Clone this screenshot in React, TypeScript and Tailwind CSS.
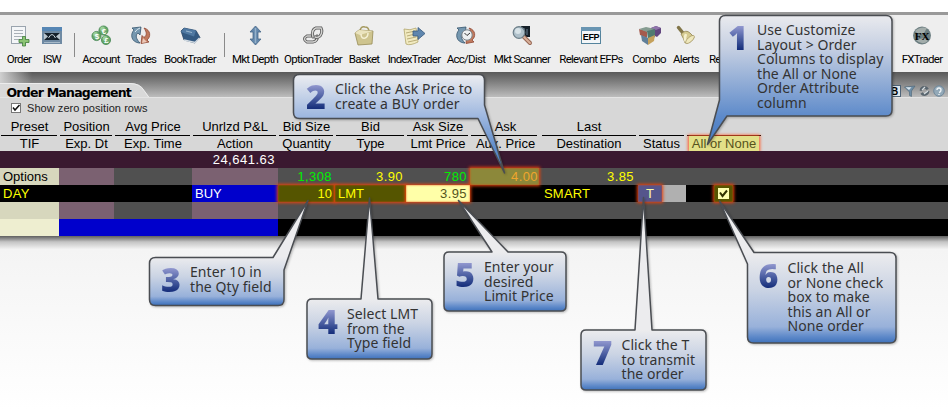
import React from "react";

type Kids = { children?: React.ReactNode };

function Icon({ children }: Kids) {
  return (
    <svg width="20" height="20" viewBox="0 0 20 20" className="shrink-0 overflow-visible">
      {children}
    </svg>
  );
}

function Tool({ w, label, left, children }: Kids & { w: string; label: string; left?: boolean }) {
  return (
    <div className={`flex shrink-0 flex-col pt-[11px] ${left ? "items-start" : "items-center"} ${w}`}>
      <div className="h-5">{children}</div>
      <span className="mt-[5px] text-[11.5px] leading-4 whitespace-nowrap text-black">{label}</span>
    </div>
  );
}

function Separator({ w }: { w: string }) {
  return (
    <div className={`flex shrink-0 justify-center pt-[18px] ${w}`}>
      <div className="h-6 w-px bg-[#8a8a8a]" />
    </div>
  );
}

const OrderIcon = () => (
  <Icon>
    <rect x="2.5" y="0.5" width="14" height="17" fill="#f4f6f8" stroke="#9aa4ae" />
    <path d="M5 4.500h9M5 7.500h9M5 10.500h9M5 13.500h6" stroke="#a9b0b8" />
    <path d="M13.500 10.500h3v3h3.500v3h-3.500v3.500h-3v-3.500H10v-3h3.500z" fill="#8cc474" stroke="#3f7d3a" strokeWidth=".8" />
  </Icon>
);
const IswIcon = () => (
  <Icon>
    <rect x="0" y="1" width="20" height="17" fill="#6f8aa3" />
    <rect x="0" y="1" width="20" height="4" fill="#5686b4" />
    <rect x="2" y="7" width="16" height="7" fill="#15202b" />
    <path d="M2 7l4 3.500L2 14zM18 7l-4 3.500 4 3.500z" fill="#b8c4cd" />
    <path d="M6.500 12q3.500-7 7 0" fill="none" stroke="#cbd5dc" />
    <path d="M2 16.500h16" stroke="#a8bac9" />
  </Icon>
);
const AccountIcon = () => (
  <Icon>
    {[
      [5.5, 10, "$"],
      [12.5, 4.5, "€"],
      [15, 14, "£"],
    ].map(([x, y, s]) => (
      <g key={s}>
        <circle cx={x} cy={y} r="4.600" fill="#65a768" stroke="#3c7f4c" strokeWidth=".7" />
        <circle cx={Number(x) - 1} cy={Number(y) - 1.5} r="2.400" fill="#9bcf98" />
        <text x={x} y={Number(y) + 3} textAnchor="middle" className="fill-white font-['Liberation_Sans',sans-serif] text-[8px] font-bold">{s}</text>
      </g>
    ))}
  </Icon>
);
const CycleShapes = () => (
  <>
    <path d="M8 17C0 16-1 8 3 4L1 2l9-1-1 8-2-2c-3 2-2 6 2 10z" fill="#7698b0" stroke="#36566e" strokeWidth=".8" />
    <path d="M13 2c7 2 7 9 3 12l2 2-8 1.500 1-8 2 2c3-2 3-5 0-9.500z" fill="#c07a5e" stroke="#8f4735" strokeWidth=".8" />
  </>
);
const TradesIcon = () => (
  <Icon>
    <CycleShapes />
    <path d="M4 6q2-3 5-4" stroke="#dbe8ef" fill="none" />
    <path d="M12 12l-1 5 5-1z" fill="#ecc8b8" />
  </Icon>
);
const BookIcon = () => (
  <Icon>
    <path d="M4 2l12 2.500 4 7-5 5.500-11-3L1 5z" fill="#345a82" stroke="#203f60" strokeWidth=".7" />
    <path d="M4 2l12 2.500-2 6L1 6z" fill="#5079a2" />
    <path d="M4 14l11 2.500 4.500-4.500" stroke="#d4dce3" strokeWidth="1.500" fill="none" />
    <path d="M6 5l6 1.500" stroke="#9ab7cf" />
  </Icon>
);
const DepthIcon = () => (
  <Icon>
    <path d="M10.500 0l5.500 6H13v7h3L10.500 19l-5.500-6h3V6H5z" fill="#6387ab" stroke="#466789" strokeWidth=".8" />
    <path d="M10.500 2v15" stroke="#96b2ca" strokeWidth="1.500" />
  </Icon>
);
const ChainIcon = () => (
  <Icon>
    <g fill="none" strokeLinecap="round">
      <path d="M8 10H4q-5 3 0 6h6q5-1 4-6" stroke="#575757" strokeWidth="3" />
      <path d="M8 10H4q-5 3 0 6h6q5-1 4-6" stroke="#d4d4d2" strokeWidth="1.400" />
      <path d="M10 11q-2-7 3-9h5q2 4-1 8-2 2-5 1" stroke="#575757" strokeWidth="3" />
      <path d="M10 11q-2-7 3-9h5q2 4-1 8-2 2-5 1" stroke="#d4d4d2" strokeWidth="1.400" />
    </g>
  </Icon>
);
const BasketIcon = () => (
  <Icon>
    <path d="M6 6q0-6 5-5 4 0 4 5" fill="none" stroke="#a59a60" strokeWidth="1.500" />
    <path d="M1 7l4-3 14 1-1 13-14 1z" fill="#cec48f" stroke="#978b56" strokeWidth=".8" />
    <path d="M1 7l5 2 13-4-14-1z" fill="#ebe4be" />
    <path d="M7 8q0 5 4 4 3-1 3-5" fill="none" stroke="#f5f0d4" strokeWidth="1.500" />
  </Icon>
);
const IndexIcon = () => (
  <Icon>
    <path d="M0 3q6 2 12-1l2 14q-8 4-12 2z" fill="#f1eac0" stroke="#b3a66b" strokeWidth=".8" />
    <path d="M2 7l9-2M3 10l8-2M3 13l9-2M4 16l9-2" stroke="#b9ac79" />
    <path d="M9 5h5V1.500l7 6-7 6V10H9z" fill="#5f86ae" stroke="#395a7e" strokeWidth=".8" />
  </Icon>
);
const AccDistIcon = () => (
  <Icon>
    <CycleShapes />
    <circle cx="11" cy="9" r="5.200" fill="#eef1f2" stroke="#7e878d" />
    <path d="M8.500 7l2.500 2.500L14 7" fill="none" stroke="#333" />
  </Icon>
);
const ScannerIcon = () => (
  <Icon>
    <rect x="9" y="0" width="9" height="11" fill="#151f28" />
    <path d="M15 3v6M12 2v3" stroke="#6a8093" />
    <path d="M12 11l6 6" stroke="#976856" strokeWidth="4" strokeLinecap="round" />
    <path d="M12 11l6 6" stroke="#d9b09a" strokeWidth="2" strokeLinecap="round" />
    <circle cx="7" cy="6.500" r="5.800" fill="#aebfc9" stroke="#6c7e88" strokeWidth="1.200" />
    <circle cx="6" cy="5" r="3" fill="#d7e2e7" />
  </Icon>
);
const EfpIcon = () => (
  <Icon>
    <rect x=".5" y="1.500" width="19" height="16" fill="#f3f6f8" stroke="#55849d" />
    <rect x="0" y="1" width="20" height="4" fill="#6995b2" />
    <text x="10" y="14" textAnchor="middle" className="fill-black font-['Liberation_Sans',sans-serif] text-[9px] font-bold tracking-[-0.3px]">EFP</text>
  </Icon>
);
const ComboIcon = () => (
  <Icon>
    <path d="M12 2l5-2 5 2v5l-4 4-6-3z" fill="#62467f" />
    <path d="M12 2l5-2 5 2-5 2z" fill="#8f74aa" />
    <path d="M0 3l8 2v7l-7-3z" fill="#a55a4d" />
    <path d="M0 3l7-2 9 2-8 3z" fill="#859c91" />
    <path d="M8 5l8-2v8l-7 3z" fill="#517a70" />
    <path d="M2 9l7 3v7l-6-4z" fill="#607f99" />
    <path d="M9 12l7-3-1 6-6 4z" fill="#c5a15c" />
  </Icon>
);
const BellIcon = () => (
  <Icon>
    <path d="M2.500 1.500l4 5" stroke="#827649" strokeWidth="3.500" strokeLinecap="round" />
    <path d="M5 8q5-5 9-1l4 4q-2 6-9 6-1-4-4-9z" fill="#d5ca91" stroke="#91834f" strokeWidth=".8" />
    <path d="M10 8q-2 4 0 8" stroke="#f5f0cf" strokeWidth="2.500" fill="none" />
    <ellipse cx="14" cy="13.500" rx="5.500" ry="2.300" transform="rotate(-42 14 13.500)" fill="#efe8bd" stroke="#a29360" strokeWidth=".7" />
  </Icon>
);
const FxIcon = () => (
  <Icon>
    <circle cx="10" cy="9.500" r="9" fill="#6d7f82" />
    <path d="M3 5q5-5 12-3l-3 5-6 1zM4 14l8-2 4 3q-6 5-12-1z" fill="#a3adab" />
    <text x="10" y="13.500" textAnchor="middle" className="fill-black font-['Liberation_Serif',serif] text-[11px] font-bold tracking-normal">FX</text>
  </Icon>
);

function Toolbar() {
  return (
    <div className="flex h-[60px] shrink-0 border-t-[3px] border-[#999] bg-[#eee] font-['Roboto',sans-serif] tracking-[-0.72px]">
      <Tool w="w-[38px]" label="Order"><OrderIcon /></Tool>
      <Tool w="w-7" label="ISW"><IswIcon /></Tool>
      <Separator w="w-4" />
      <Tool w="w-[38px]" label="Account"><AccountIcon /></Tool>
      <Tool w="w-[42px]" label="Trades"><TradesIcon /></Tool>
      <Tool w="w-14" label="BookTrader"><BookIcon /></Tool>
      <Separator w="w-3" />
      <Tool w="w-[50px]" label="Mkt Depth"><DepthIcon /></Tool>
      <Tool w="w-[66px]" label="OptionTrader"><ChainIcon /></Tool>
      <Tool w="w-9" label="Basket"><BasketIcon /></Tool>
      <Tool w="w-16" label="IndexTrader"><IndexIcon /></Tool>
      <Tool w="w-10" label="Acc/Dist"><AccDistIcon /></Tool>
      <Tool w="w-[72px]" label="Mkt Scanner"><ScannerIcon /></Tool>
      <Tool w="w-[66px]" label="Relevant EFPs"><EfpIcon /></Tool>
      <Tool w="w-[50px]" label="Combo"><ComboIcon /></Tool>
      <Tool w="w-6" label="Alerts"><BellIcon /></Tool>
      <Tool w="ml-[11px] w-12" label="Re" left />
      <Tool w="mr-1.5 ml-auto w-10" label="FXTrader"><FxIcon /></Tool>
    </div>
  );
}

function TitleBar() {
  return (
    <div className="relative flex h-[25px] shrink-0 items-end justify-between bg-linear-to-b from-[#595959] to-[#bdbdbd]">
      <div className="absolute top-0 left-0 h-full w-8 bg-linear-to-r from-[#d0d0d0] to-transparent" />
      <div className="relative h-3.5 w-[150px]">
        <svg width="150" height="14" className="absolute inset-0">
          <path d="M0 0h130q10 0 14 7l5 7H0z" fill="#d9d9d9" />
          <path d="M0 .5h130q10 0 14 7l5 7" fill="none" stroke="#ececec" />
        </svg>
        <h1 className="relative pt-[2px] pl-[6.500px] font-['DejaVu_Sans',sans-serif] text-[12.5px] leading-4 font-bold tracking-[-0.76px] whitespace-nowrap text-black">
          Order Management
        </h1>
      </div>
      <div className="mr-[3px] flex gap-[3px]">
        <svg width="13" height="12"><rect x=".5" y=".5" width="12" height="11" fill="#dfe7ec" stroke="#4d6377" /><text x="6.500" y="9.500" textAnchor="middle" className="fill-black font-['Liberation_Sans',sans-serif] text-[10px] font-bold">B</text></svg>
        <svg width="12" height="12"><path d="M.5 2L11 1 7.500 6v5.500l-2-1V7z" fill="#6e8da5" stroke="#4b6477" strokeWidth=".6" /><path d="M1.500 2.200h6L5 5z" fill="#d9e6ee" /></svg>
        <svg width="11" height="12"><circle cx="5.500" cy="6" r="3.600" fill="none" stroke="#59656e" strokeWidth="2.600" strokeDasharray="9 2.300" /><path d="M3 5l3-3M5 9l4-3" stroke="#d6dde1" strokeWidth="1.200" /></svg>
        <svg width="12" height="12"><circle cx="6" cy="6" r="5.300" fill="#93a9b8" stroke="#71889a" /><path d="M4 5q0-2 2-2t2 2-2 2.500M6 9v1" fill="none" stroke="#eef3f6" strokeWidth="1.400" /></svg>
      </div>
    </div>
  );
}

const headers = [
  { w: "w-[59px]", top: "Preset", bottom: "TIF", line: "ml-px mr-0.5" },
  { w: "w-[55px]", top: "Position", bottom: "Exp. Dt", line: "ml-px mr-0.5" },
  { w: "w-[78px]", top: "Avg Price", bottom: "Exp. Time", line: "ml-px mr-0.5" },
  { w: "w-[86px]", top: "Unrlzd P&L", bottom: "Action", line: "ml-px mr-0.5" },
  { w: "w-[57px]", top: "Bid Size", bottom: "Quantity", line: "ml-px mr-0.5" },
  { w: "w-[71px]", top: "Bid", bottom: "Type", line: "ml-px mr-0.5" },
  { w: "w-16", top: "Ask Size", bottom: "Lmt Price", line: "ml-px mr-0.5" },
  { w: "w-[71px]", top: "Ask", bottom: "Aux. Price", line: "ml-px mr-1" },
  { w: "w-24", top: "Last", bottom: "Destination", line: "ml-px mr-px" },
  { w: "w-[49px]", top: "", bottom: "Status", line: "ml-0.5 mr-0.5" },
  { w: "w-[76px]", top: "", bottom: "All or None", line: "ml-px mr-px", marked: true },
];

function HeaderRow() {
  return (
    <div className="flex h-[33px] shrink-0 text-center text-[13px] whitespace-nowrap">
      {headers.map((h) => (
        <div key={h.bottom} className={`flex shrink-0 flex-col ${h.w}`}>
          <div className="h-[17px] leading-[17px]">{h.top}</div>
          <div className={`h-px bg-black ${h.line}`} />
          {h.marked ? (
            <div className="mx-[3px] h-[15px] bg-[#e3e088] leading-4 text-[#57531c] shadow-[0_0_3px_1px_#ff5a28]">{h.bottom}</div>
          ) : (
            <div className="h-[15px] leading-4">{h.bottom}</div>
          )}
        </div>
      ))}
    </div>
  );
}

const glow = "relative shadow-[0_0_3px_1px_#e8430c,inset_0_0_2px_#e8430c]";

function Grid() {
  return (
    <div className="flex shrink-0 flex-col text-[13px] leading-[18px] whitespace-nowrap text-[#ffff00]">
      <div className="flex h-[17px] bg-[#3a1930]">
        <div className="w-[275px] text-right tracking-[0.5px] text-white">24,641.63</div>
      </div>
      <div className="flex h-[17px] bg-[#505050] text-right tracking-[0.4px]">
        <div className="w-[59px] bg-[#d7d7bd] pl-[3px] text-left tracking-normal text-black">Options</div>
        <div className="w-[55px] bg-[#7b6171]" />
        <div className="w-[78px]" />
        <div className="w-[86px] bg-[#7b6171]" />
        <div className="w-[57px] pr-[3px] text-[#00f000]">1,308</div>
        <div className="w-[71px] pr-[3px]">3.90</div>
        <div className="w-16 pr-[3px] text-[#00f000]">780</div>
        <div className={`w-[69px] bg-[#8c883a] pr-px text-[#f0a52c] ${glow}`}>4.00</div>
        <div className="w-[98px] pr-[3px]">3.85</div>
      </div>
      <div className="flex h-[17px] bg-black">
        <div className="w-[192px] pl-[3px] tracking-[0.3px]">DAY</div>
        <div className="w-[86px] bg-[#0000cc] pl-[3px] text-white">BUY</div>
        <div className={`w-[57px] bg-[#555500] pr-[3px] text-right ${glow}`}>10</div>
        <div className={`w-[71px] bg-[#555500] pl-[3px] ${glow}`}>LMT</div>
        <div className={`w-16 bg-[#ffffa8] pr-[3px] text-right tracking-[0.4px] text-[#55551c] ${glow}`}>3.95</div>
        <div className="w-[168px] pl-[74px] tracking-[0.2px]">SMART</div>
        <div className={`w-6 bg-[#55558c] text-center text-[#ffffaa] ${glow}`}>T</div>
        <div className="w-6 bg-[#b0b0b0]" />
        <div className={`ml-7 flex w-[19px] items-center justify-center bg-[#555500] ${glow}`}>
          <svg width="11" height="11"><rect width="11" height="11" fill="#ffffb0" /><path d="M2 4.500l2.500 3.500L9 2.500" stroke="#333300" strokeWidth="2" fill="none" /></svg>
        </div>
      </div>
      <div className="flex h-[17px] bg-[#505050]">
        <div className="w-[59px] bg-[#d7d7bd]" />
        <div className="w-[55px] bg-[#7b6171]" />
        <div className="w-[78px]" />
        <div className="w-[86px] bg-[#7b6171]" />
      </div>
      <div className="flex h-[17px] bg-black">
        <div className="w-[59px] bg-[#eeeed0]" />
        <div className="w-[219px] bg-[#0000cc]" />
      </div>
    </div>
  );
}

type CalloutProps = {
  n: string;
  d: string;
  fill: string;
  box: string;
  lines: string[];
};

const callouts: CalloutProps[] = [
  {
    n: "1", fill: "url(#deep)", box: "left-[719px] top-[15px] pl-[9px] pt-2",
    d: "M725.500 15.500H886q6 0 6 6V110q0 6-6 6H727L707.500 144.500 719.500 100V21.500q0-6 6-6z",
    lines: ["Use Customize", "Layout > Order", "Columns to display", "the All or None", "Order Attribute", "column"],
  },
  {
    n: "2", fill: "url(#mid)", box: "left-[294px] top-[74px] pl-[12px] pt-2",
    d: "M299.500 74.500H479q5.500 0 5.500 6V105L504.500 173 478 118.500H299.500q-6 0-6-6V80.500q0-6 6-6z",
    lines: ["Click the Ask Price to", "create a BUY order"],
  },
  {
    n: "3", fill: "url(#low3)", box: "left-[149px] top-[257px] pl-[12px] pt-2",
    d: "M155.500 257.500H273L308 200.500 284 270V299.500q0 6-6 6H155.500q-6 0-6-6V263.500q0-6 6-6z",
    lines: ["Enter 10 in", "the Qty field"],
  },
  {
    n: "4", fill: "url(#low4)", box: "left-[308px] top-[299px] pl-[10px] pt-2",
    d: "M312 299H361L369.500 198 378 299H427q5 0 5 5V354q0 5-5 5H312q-5 0-5-5V304q0-5 5-5z",
    lines: ["Select LMT", "from the", "Type field"],
  },
  {
    n: "5", fill: "url(#low5)", box: "left-[444px] top-[252px] pl-[11px] pt-2",
    d: "M449 252H492L458.500 200.500 508 252H561q5 0 5 5V306q0 5-5 5H449q-5 0-5-5V257q0-5 5-5z",
    lines: ["Enter your", "desired", "Limit Price"],
  },
  {
    n: "6", fill: "url(#low6)", box: "left-[748px] top-[253px] pl-[10.500px] pt-2",
    d: "M754 252.500L719.500 201 747.500 264V337q0 6 6 6H890q6 0 6-6V258.500q0-6-6-6z",
    lines: ["Click the All", "or None check", "box to make", "this an All or", "None order"],
  },
  {
    n: "7", fill: "url(#low7)", box: "left-[581px] top-[330px] pl-[11.500px] pt-2",
    d: "M586 330H635L643.500 197.500 652 330H701q5 0 5 5V385q0 5-5 5H586q-5 0-5-5V335q0-5 5-5z",
    lines: ["Click the T", "to transmit", "the order"],
  },
];

const lowBoxes = [
  { id: "low3", y1: 257, y2: 305 },
  { id: "low4", y1: 299, y2: 359 },
  { id: "low5", y1: 252, y2: 311 },
  { id: "low6", y1: 253, y2: 343 },
  { id: "low7", y1: 330, y2: 390 },
];

function Callouts() {
  return (
    <>
      <svg width="948" height="410" className="absolute inset-0">
        <defs>
          <linearGradient id="deep" gradientUnits="userSpaceOnUse" x1="0" y1="16" x2="0" y2="145">
            <stop offset="0" stopColor="#e9eaee" />
            <stop offset=".25" stopColor="#c5cfe2" />
            <stop offset=".78" stopColor="#5d8aca" />
            <stop offset="1" stopColor="#4478c0" />
          </linearGradient>
          <linearGradient id="mid" gradientUnits="userSpaceOnUse" x1="0" y1="74" x2="0" y2="173">
            <stop offset="0" stopColor="#edeef1" />
            <stop offset=".44" stopColor="#9cb6df" />
            <stop offset=".75" stopColor="#5e8ccb" />
            <stop offset="1" stopColor="#3b70b6" />
          </linearGradient>
          {lowBoxes.map((g) => (
            <linearGradient key={g.id} id={g.id} gradientUnits="userSpaceOnUse" x1="0" y1={g.y1} x2="0" y2={g.y2}>
              <stop offset="0" stopColor="#ececee" />
              <stop offset=".4" stopColor="#cbd4e4" />
              <stop offset=".82" stopColor="#98b1da" />
              <stop offset=".93" stopColor="#5e89c9" />
              <stop offset="1" stopColor="#3f72bb" />
            </linearGradient>
          ))}
        </defs>
        {callouts.map((c) => (
          <path key={c.n} d={c.d} fill={c.fill} stroke="#4a4d52" strokeWidth="1.500" strokeLinejoin="round" className="drop-shadow-[1px_1px_1px_rgba(0,0,0,0.25)]" />
        ))}
      </svg>
      {callouts.map((c) => (
        <div key={c.n} className={`absolute flex items-start font-['Noto_Sans',sans-serif] ${c.box}`}>
          <span className="w-[29px] bg-linear-to-b from-[#9298cf] from-10% to-[#18307d] to-90% bg-clip-text text-[34px] leading-[29px] font-black text-transparent">
            {c.n}
          </span>
          <p className="text-[14px] leading-[14.5px] tracking-[0.08px] whitespace-nowrap text-[#333]">
            {c.lines.map((l) => (
              <span key={l} className="block">{l}</span>
            ))}
          </p>
        </div>
      ))}
    </>
  );
}

export default function App() {
  return (
    <div className="relative flex h-[410px] w-[948px] flex-col overflow-hidden bg-white pt-3 font-['Liberation_Sans',sans-serif]">
      <Toolbar />
      <TitleBar />
      <div className="flex shrink-0 flex-col border-t border-[#e4e4e4] bg-[#d7d7d7]">
        <label className="flex h-5 items-center pl-[11px] text-[11px] leading-4 tracking-[0.06px] text-[#222]">
          <svg width="10" height="10" className="mr-1.5"><rect x=".5" y=".5" width="9" height="9" fill="#fff" stroke="#777" /><path d="M2 4.500l2 2.500L8.500 2" stroke="#111" strokeWidth="1.500" fill="none" /></svg>
          Show zero position rows
        </label>
        <HeaderRow />
      </div>
      <Grid />
      <div className="h-[13px] shrink-0 bg-linear-to-b from-[#606060] via-[#c4c4c4] via-45% to-[#f2f2f2]" />
      <div className="grow bg-linear-to-b from-[#f4f4f4] to-white" />
      <Callouts />
    </div>
  );
}
